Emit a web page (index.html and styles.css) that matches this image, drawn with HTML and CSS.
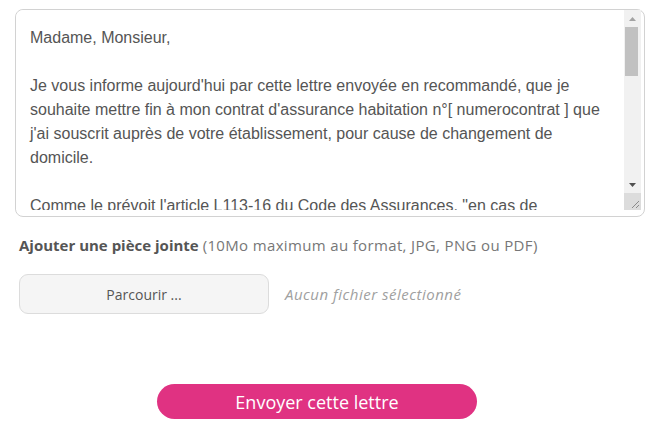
FILE: index.html
```html
<!DOCTYPE html>
<html lang="fr">
<head>
  <meta charset="UTF-8">
  <title>Envoyer une lettre</title>
  <link rel="stylesheet" href="styles.css">
</head>
<body>

  <form class="letter-form">
    <!-- Letter body + its scrollbar -->
    <div class="letter-box">
      <textarea class="letter" name="letter">Madame, Monsieur,

Je vous informe aujourd'hui par cette lettre envoyée en recommandé, que je souhaite mettre fin à mon contrat d'assurance habitation n°[ numerocontrat ] que j'ai souscrit auprès de votre établissement, pour cause de changement de domicile.

Comme le prévoit l'article L113-16 du Code des Assurances, "en cas de survenance d'un des événements suivants : changement de domicile, changement de situation matrimoniale, changement de régime matrimonial, changement de profession, retraite professionnelle ou cessation définitive d'activité professionnelle, le contrat d'assurance peut être résilié par chacune des parties".

Je vous prie d'agréer, Madame, Monsieur, l'expression de mes salutations distinguées.

[ prenom ] [ nom ]</textarea>
      <div class="scrollbar">
        <div class="sb-btn">
          <svg width="7" height="4" viewBox="0 0 7 4"><path d="M0 4L3.5 0L7 4z" fill="#a3a3a3"/></svg>
        </div>
        <div class="sb-track">
          <div class="sb-thumb"></div>
        </div>
        <div class="sb-btn">
          <svg width="7" height="4" viewBox="0 0 7 4"><path d="M0 0L7 0L3.5 4z" fill="#505050"/></svg>
        </div>
        <div class="sb-resizer">
          <svg width="17" height="17" viewBox="0 0 17 17"><path d="M15 8L8 15M15 12L12 15" stroke="#8a8a8a" stroke-width="1"/></svg>
        </div>
      </div>
    </div>

    <!-- Attachment -->
    <p class="attach-label"><strong>Ajouter une pièce jointe</strong> <span class="hint">(10Mo maximum au format, JPG, PNG ou PDF)</span></p>
    <div class="file-row">
      <button type="button" class="file-btn">Parcourir ...</button>
      <span class="file-name">Aucun fichier sélectionné</span>
    </div>

    <div class="submit-row">
      <button type="submit" class="send-btn">Envoyer cette lettre</button>
      <span class="dot"></span>
    </div>
  </form>

</body>
</html>
```

FILE: styles.css
```css
* {
  box-sizing: border-box;
}

body {
  margin: 0;
  background: #fff;
  font-family: 'Open Sans', 'Lato', sans-serif;
  overflow: hidden;
}

.letter-form {
  padding: 9px 16px 0 15px;
}

/* frame round the textarea, scrollbar sits a little inside it */
.letter-box {
  display: flex;
  width: 630px;
  padding: 0 3px 6px 0;
  border: 1px solid #d2d2d2;
  border-radius: 8px;
}

.letter {
  display: block;
  flex: 1;
  height: 200px;
  margin: 0;
  padding: 16px 14px 0 14px;
  border: none;
  border-radius: 8px 0 0 0;
  outline: none;
  font-family: 'Liberation Sans', Arial, sans-serif;
  font-size: 16px;
  line-height: 24px;
  color: #555;
  overflow: hidden;
  resize: none;
}

.scrollbar {
  display: flex;
  flex-direction: column;
  width: 17px;
  height: 200px;
  background: #f1f1f1;
}

.sb-btn {
  display: flex;
  align-items: center;
  justify-content: center;
  height: 17px;
}

.sb-btn svg {
  display: block;
}

.sb-track {
  flex: 1;
  padding: 0 3px 0 1px;
}

.sb-thumb {
  height: 49px;
  background: #c1c1c1;
}

.sb-resizer {
  height: 17px;
  background: #dcdcdc;
}

.sb-resizer svg {
  display: block;
}

.attach-label {
  margin: 18px 0 0 4px;
  font-size: 15px;
  line-height: 20px;
  color: #555;
}

.attach-label strong {
  font-weight: 700;
}

.hint {
  color: #777;
  letter-spacing: 0.35px;
}

.file-row {
  display: flex;
  align-items: center;
  margin: 19px 0 0 4px;
}

.file-btn {
  width: 250px;
  height: 40px;
  background: #f5f5f5;
  border: 1px solid #dcdcdc;
  border-radius: 9px;
  font-family: inherit;
  font-size: 14px;
  color: #555;
  cursor: pointer;
}

.file-name {
  margin-left: 16px;
  font-size: 15px;
  font-style: italic;
  letter-spacing: 0.5px;
  color: #a0a0a0;
}

.submit-row {
  position: relative;
  display: flex;
  margin-top: 70px;
}

.send-btn {
  width: 320px;
  height: 35px;
  margin-left: 142px;
  background: #e03282;
  border: none;
  border-radius: 18px;
  font-family: inherit;
  font-size: 18px;
  color: #fff;
  cursor: pointer;
}

.dot {
  position: absolute;
  left: 424px;
  top: 41px;
  width: 12px;
  height: 8px;
  border-radius: 50%;
  background: #fbe77a;
}
```
